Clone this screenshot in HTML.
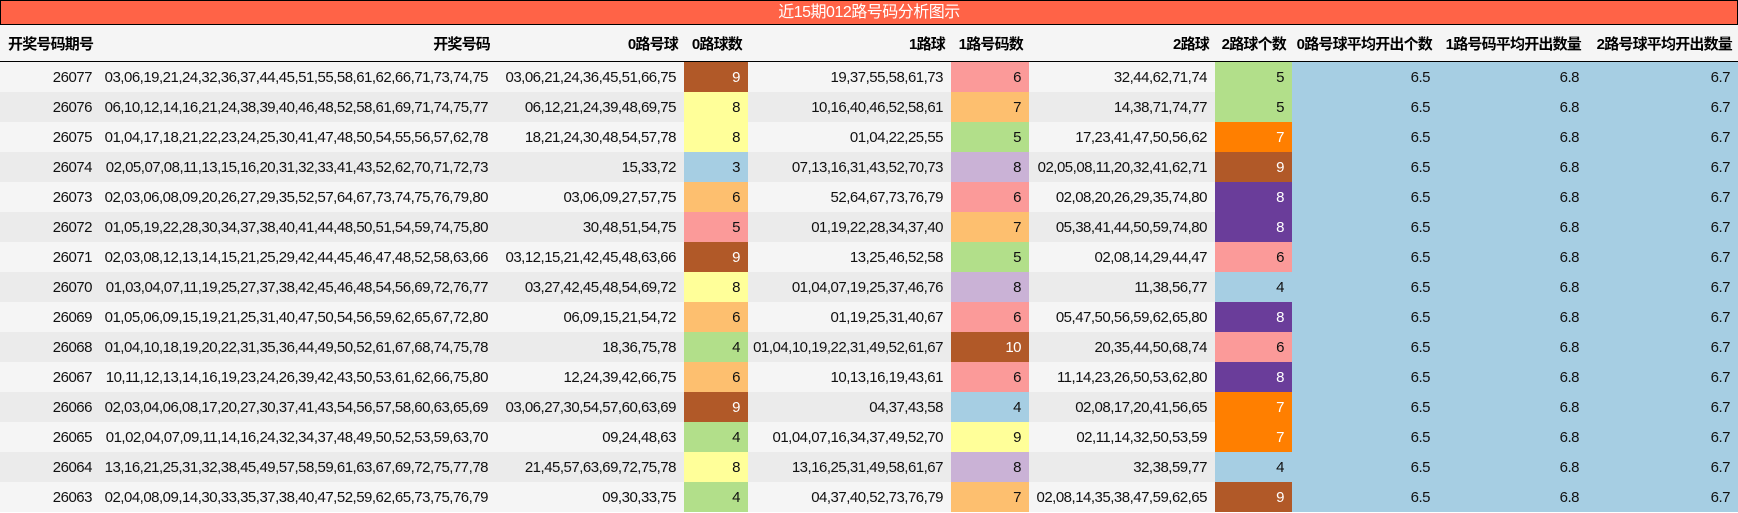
<!DOCTYPE html>
<html><head><meta charset="utf-8"><style>
html,body{margin:0;padding:0;background:#fff;width:1738px;height:513px;overflow:hidden}
body{font-family:"Liberation Sans","Noto Sans CJK SC",sans-serif;font-size:15px;letter-spacing:-0.5px}
.title{height:23px;background:#ff6347;border:1px solid #000;color:#fff;text-align:center;line-height:23px;font-size:16px}
table{border-collapse:collapse;table-layout:fixed;width:1738px}
th{height:36px;background:#f5f5f5;font-weight:bold;text-align:right;padding:0 6px 0 0;border-bottom:1px solid #000;white-space:nowrap;letter-spacing:-0.8px}
th:first-child{text-align:left;padding-left:8px}
td{height:30px;padding:0 8px 0 0;text-align:right;white-space:nowrap;color:#111}
tr.o td{background:#f5f5f5} tr.e td{background:#ebebeb}
tr td.c3{background:#a6cee3} tr td.c4{background:#b2df8a} tr td.c5{background:#fb9a99}
tr td.c6{background:#fdbf6f} tr td.y{background:#ffff99}
tr td.l{background:#cab2d6} tr td.br{background:#b15928;color:#fff} tr td.or{background:#ff7f00;color:#fff}
tr td.pu{background:#6a3d9a;color:#fff} tr td.b{background:#a6cee3}
</style></head><body>
<div class="title">近15期012路号码分析图示</div>
<table>
<colgroup><col style="width:100px"><col style="width:396px"><col style="width:188px"><col style="width:64px"><col style="width:203px"><col style="width:78px"><col style="width:186px"><col style="width:77px"><col style="width:146px"><col style="width:149px"><col style="width:151px"></colgroup>
<tr><th>开奖号码期号</th><th>开奖号码</th><th>0路号球</th><th>0路球数</th><th>1路球</th><th>1路号码数</th><th>2路球</th><th>2路球个数</th><th>0路号球平均开出个数</th><th>1路号码平均开出数量</th><th>2路号球平均开出数量</th></tr>
<tr class="o"><td>26077</td><td>03,06,19,21,24,32,36,37,44,45,51,55,58,61,62,66,71,73,74,75</td><td>03,06,21,24,36,45,51,66,75</td><td class="br">9</td><td>19,37,55,58,61,73</td><td class="c5">6</td><td>32,44,62,71,74</td><td class="c4">5</td><td class="b">6.5</td><td class="b">6.8</td><td class="b">6.7</td></tr>
<tr class="e"><td>26076</td><td>06,10,12,14,16,21,24,38,39,40,46,48,52,58,61,69,71,74,75,77</td><td>06,12,21,24,39,48,69,75</td><td class="y">8</td><td>10,16,40,46,52,58,61</td><td class="c6">7</td><td>14,38,71,74,77</td><td class="c4">5</td><td class="b">6.5</td><td class="b">6.8</td><td class="b">6.7</td></tr>
<tr class="o"><td>26075</td><td>01,04,17,18,21,22,23,24,25,30,41,47,48,50,54,55,56,57,62,78</td><td>18,21,24,30,48,54,57,78</td><td class="y">8</td><td>01,04,22,25,55</td><td class="c4">5</td><td>17,23,41,47,50,56,62</td><td class="or">7</td><td class="b">6.5</td><td class="b">6.8</td><td class="b">6.7</td></tr>
<tr class="e"><td>26074</td><td>02,05,07,08,11,13,15,16,20,31,32,33,41,43,52,62,70,71,72,73</td><td>15,33,72</td><td class="c3">3</td><td>07,13,16,31,43,52,70,73</td><td class="l">8</td><td>02,05,08,11,20,32,41,62,71</td><td class="br">9</td><td class="b">6.5</td><td class="b">6.8</td><td class="b">6.7</td></tr>
<tr class="o"><td>26073</td><td>02,03,06,08,09,20,26,27,29,35,52,57,64,67,73,74,75,76,79,80</td><td>03,06,09,27,57,75</td><td class="c6">6</td><td>52,64,67,73,76,79</td><td class="c5">6</td><td>02,08,20,26,29,35,74,80</td><td class="pu">8</td><td class="b">6.5</td><td class="b">6.8</td><td class="b">6.7</td></tr>
<tr class="e"><td>26072</td><td>01,05,19,22,28,30,34,37,38,40,41,44,48,50,51,54,59,74,75,80</td><td>30,48,51,54,75</td><td class="c5">5</td><td>01,19,22,28,34,37,40</td><td class="c6">7</td><td>05,38,41,44,50,59,74,80</td><td class="pu">8</td><td class="b">6.5</td><td class="b">6.8</td><td class="b">6.7</td></tr>
<tr class="o"><td>26071</td><td>02,03,08,12,13,14,15,21,25,29,42,44,45,46,47,48,52,58,63,66</td><td>03,12,15,21,42,45,48,63,66</td><td class="br">9</td><td>13,25,46,52,58</td><td class="c4">5</td><td>02,08,14,29,44,47</td><td class="c5">6</td><td class="b">6.5</td><td class="b">6.8</td><td class="b">6.7</td></tr>
<tr class="e"><td>26070</td><td>01,03,04,07,11,19,25,27,37,38,42,45,46,48,54,56,69,72,76,77</td><td>03,27,42,45,48,54,69,72</td><td class="y">8</td><td>01,04,07,19,25,37,46,76</td><td class="l">8</td><td>11,38,56,77</td><td class="c3">4</td><td class="b">6.5</td><td class="b">6.8</td><td class="b">6.7</td></tr>
<tr class="o"><td>26069</td><td>01,05,06,09,15,19,21,25,31,40,47,50,54,56,59,62,65,67,72,80</td><td>06,09,15,21,54,72</td><td class="c6">6</td><td>01,19,25,31,40,67</td><td class="c5">6</td><td>05,47,50,56,59,62,65,80</td><td class="pu">8</td><td class="b">6.5</td><td class="b">6.8</td><td class="b">6.7</td></tr>
<tr class="e"><td>26068</td><td>01,04,10,18,19,20,22,31,35,36,44,49,50,52,61,67,68,74,75,78</td><td>18,36,75,78</td><td class="c4">4</td><td>01,04,10,19,22,31,49,52,61,67</td><td class="br">10</td><td>20,35,44,50,68,74</td><td class="c5">6</td><td class="b">6.5</td><td class="b">6.8</td><td class="b">6.7</td></tr>
<tr class="o"><td>26067</td><td>10,11,12,13,14,16,19,23,24,26,39,42,43,50,53,61,62,66,75,80</td><td>12,24,39,42,66,75</td><td class="c6">6</td><td>10,13,16,19,43,61</td><td class="c5">6</td><td>11,14,23,26,50,53,62,80</td><td class="pu">8</td><td class="b">6.5</td><td class="b">6.8</td><td class="b">6.7</td></tr>
<tr class="e"><td>26066</td><td>02,03,04,06,08,17,20,27,30,37,41,43,54,56,57,58,60,63,65,69</td><td>03,06,27,30,54,57,60,63,69</td><td class="br">9</td><td>04,37,43,58</td><td class="c3">4</td><td>02,08,17,20,41,56,65</td><td class="or">7</td><td class="b">6.5</td><td class="b">6.8</td><td class="b">6.7</td></tr>
<tr class="o"><td>26065</td><td>01,02,04,07,09,11,14,16,24,32,34,37,48,49,50,52,53,59,63,70</td><td>09,24,48,63</td><td class="c4">4</td><td>01,04,07,16,34,37,49,52,70</td><td class="y">9</td><td>02,11,14,32,50,53,59</td><td class="or">7</td><td class="b">6.5</td><td class="b">6.8</td><td class="b">6.7</td></tr>
<tr class="e"><td>26064</td><td>13,16,21,25,31,32,38,45,49,57,58,59,61,63,67,69,72,75,77,78</td><td>21,45,57,63,69,72,75,78</td><td class="y">8</td><td>13,16,25,31,49,58,61,67</td><td class="l">8</td><td>32,38,59,77</td><td class="c3">4</td><td class="b">6.5</td><td class="b">6.8</td><td class="b">6.7</td></tr>
<tr class="o"><td>26063</td><td>02,04,08,09,14,30,33,35,37,38,40,47,52,59,62,65,73,75,76,79</td><td>09,30,33,75</td><td class="c4">4</td><td>04,37,40,52,73,76,79</td><td class="c6">7</td><td>02,08,14,35,38,47,59,62,65</td><td class="br">9</td><td class="b">6.5</td><td class="b">6.8</td><td class="b">6.7</td></tr>
</table>
</body></html>
